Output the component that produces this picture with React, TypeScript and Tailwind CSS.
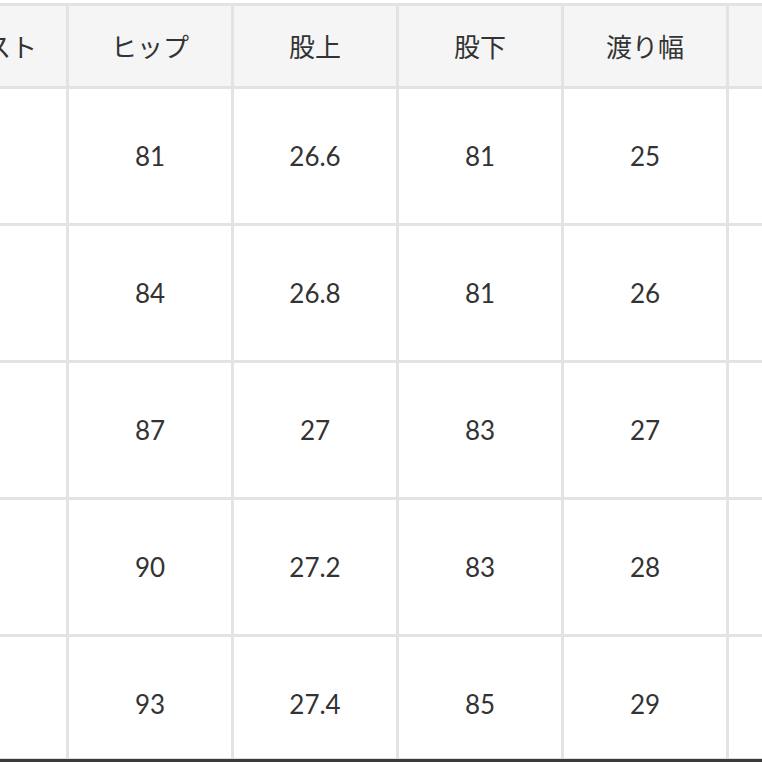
import React from "react";

const headers = ["ウエスト", "ヒップ", "股上", "股下", "渡り幅", "裾幅"];
const rows = [
  ["64", "81", "26.6", "81", "25", "18"],
  ["67", "84", "26.8", "81", "26", "18.5"],
  ["70", "87", "27", "83", "27", "19"],
  ["73", "90", "27.2", "83", "28", "19.5"],
  ["76", "93", "27.4", "85", "29", "20"],
];

export default function App() {
  return (
    <div className="relative w-[762px] h-[762px] overflow-hidden bg-white text-[#333333]">
      <div className="pt-[3px]">
        <div className="ml-[-96px] w-max border-t-[3px] border-[#e3e3e3]">
          <div className="flex">
            {headers.map((h) => (
              <div
                key={h}
                className="w-[165px] h-[83px] shrink-0 flex items-center justify-center bg-[#f5f5f5] border-r-[3px] border-b-[3px] border-[#e3e3e3] text-[26px] leading-none"
                style={{ fontFamily: '"Noto Sans CJK JP", "Noto Sans", sans-serif' }}
              >
                {h}
              </div>
            ))}
          </div>
          {rows.map((r, i) => (
            <div key={i} className="flex">
              {r.map((v, j) => (
                <div
                  key={j}
                  className="w-[165px] h-[137px] shrink-0 flex items-center justify-center bg-white border-r-[3px] border-b-[3px] border-[#e3e3e3] text-[26px] leading-none"
                  style={{ fontFamily: 'Lato, "Noto Sans", sans-serif' }}
                >
                  {v}
                </div>
              ))}
            </div>
          ))}
        </div>
      </div>
      <div className="absolute left-0 right-0 bottom-0 h-[4px] border-t border-[#dcdcdc] bg-[#3a3a3a]" />
    </div>
  );
}
